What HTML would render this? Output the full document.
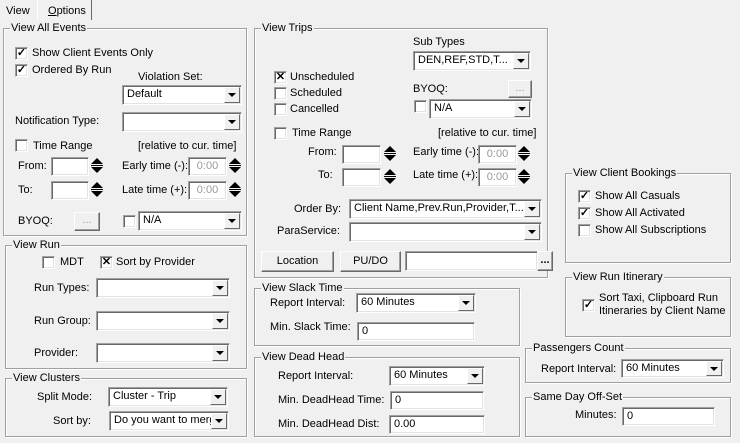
<!DOCTYPE html>
<html><head><meta charset="utf-8"><style>
*{box-sizing:border-box;margin:0;padding:0}
body{width:740px;height:443px;background:#f0f0f0;font:11px "Liberation Sans",Arial,sans-serif;color:#000;position:relative;overflow:hidden}
div,span{position:absolute}
.l{line-height:14px;white-space:nowrap}
.g{border:1px solid #a0a0a0;box-shadow:1px 1px 0 #fff,inset 1px 1px 0 #fff}
.gt{background:#f0f0f0;line-height:12px;padding:0 1px;top:-7px;left:6px;white-space:nowrap}
.f{background:#fff;border:1px solid;border-color:#a0a0a0 #fff #fff #a0a0a0;box-shadow:inset 1px 1px 0 #696969,inset -1px -1px 0 #e3e3e3;line-height:17px;padding-left:4px;white-space:nowrap;overflow:hidden}
.f.d{color:#9a9a9a;text-align:center;padding:0}
.dd{right:1px;top:1px;width:16px;height:calc(100% - 2px);background:#f0f0f0;border:1px solid;border-color:#fff #696969 #696969 #fff}
.dd:after{content:"";position:absolute;left:3px;top:50%;margin-top:-2px;border-left:4px solid transparent;border-right:4px solid transparent;border-top:4px solid #000}
.cb{width:13px;height:13px;background:#fff;border:1px solid;border-color:#a0a0a0 #fff #fff #a0a0a0;box-shadow:inset 1px 1px 0 #696969,inset -1px -1px 0 #e3e3e3}
.b{background:#f0f0f0;border:1px solid;border-color:#fff #696969 #696969 #fff;box-shadow:inset -1px -1px 0 #a0a0a0;text-align:center}
.sp{width:14px;height:18px}
.sp:before{content:"";position:absolute;left:1px;top:1px;border-left:6px solid transparent;border-right:6px solid transparent;border-bottom:6px solid #000}
.sp:after{content:"";position:absolute;left:1px;top:10px;border-left:6px solid transparent;border-right:6px solid transparent;border-top:6px solid #000}
.sp i{position:absolute;left:1px;top:8px;width:12px;height:1px;background:#000}
</style></head><body>

<!-- tabs -->
<span class="l" style="left:6px;top:4px">View</span>
<span class="l" style="left:48px;top:4px"><u>O</u>ptions</span>
<div style="left:91px;top:0;width:1px;height:20px;background:#696969"></div>
<div style="left:37px;top:0;width:1px;height:20px;background:#fff"></div>

<!-- View All Events -->
<div class="g" style="left:3px;top:28px;width:244px;height:208px"><span class="gt">View All Events</span></div>
<div class="cb" style="left:15px;top:47px"></div><span class="l" style="left:15px;top:46px;font-weight:bold;width:13px;text-align:center">✓</span>
<span class="l" style="left:32px;top:46px">Show Client Events Only</span>
<div class="cb" style="left:15px;top:64px"></div><span class="l" style="left:15px;top:63px;font-weight:bold;width:13px;text-align:center">✓</span>
<span class="l" style="left:32px;top:63px">Ordered By Run</span>
<span class="l" style="left:138px;top:70px">Violation Set:</span>
<div class="f" style="left:122px;top:85px;width:120px;height:20px">Default<div class="dd"></div></div>
<span class="l" style="left:15px;top:114px">Notification Type:</span>
<div class="f" style="left:122px;top:112px;width:120px;height:20px"><div class="dd"></div></div>
<div class="cb" style="left:15px;top:139px"></div>
<span class="l" style="left:33px;top:139px">Time Range</span>
<span class="l" style="left:138px;top:139px">[relative to cur. time]</span>
<span class="l" style="left:18px;top:159px">From:</span>
<div class="f" style="left:51px;top:157px;width:38px;height:19px"></div><div class="sp" style="left:90px;top:157px"><i></i></div>
<span class="l" style="left:122px;top:159px">Early time (-):</span>
<div class="f d" style="left:188px;top:157px;width:39px;height:19px">0:00</div><div class="sp" style="left:228px;top:157px"><i></i></div>
<span class="l" style="left:18px;top:183px">To:</span>
<div class="f" style="left:51px;top:181px;width:38px;height:19px"></div><div class="sp" style="left:90px;top:181px"><i></i></div>
<span class="l" style="left:122px;top:183px">Late time (+):</span>
<div class="f d" style="left:188px;top:181px;width:39px;height:19px">0:00</div><div class="sp" style="left:228px;top:181px"><i></i></div>
<span class="l" style="left:18px;top:214px">BYOQ:</span>
<div class="b" style="left:74px;top:212px;width:26px;height:19px;color:#a0a0a0;line-height:15px">...</div>
<div class="cb" style="left:123px;top:215px"></div>
<div class="f" style="left:138px;top:211px;width:104px;height:20px">N/A<div class="dd"></div></div>

<!-- View Run -->
<div class="g" style="left:5px;top:245px;width:242px;height:124px"><span class="gt">View Run</span></div>
<div class="cb" style="left:42px;top:256px"></div><span class="l" style="left:60px;top:255px">MDT</span>
<div class="cb" style="left:100px;top:256px"></div><span class="l" style="left:100px;top:255px;width:13px;text-align:center;font-weight:bold">✕</span>
<span class="l" style="left:116px;top:255px">Sort by Provider</span>
<span class="l" style="left:34px;top:281px">Run Types:</span>
<div class="f" style="left:96px;top:278px;width:134px;height:20px"><div class="dd"></div></div>
<span class="l" style="left:34px;top:314px">Run Group:</span>
<div class="f" style="left:96px;top:311px;width:134px;height:20px"><div class="dd"></div></div>
<span class="l" style="left:34px;top:346px">Provider:</span>
<div class="f" style="left:96px;top:343px;width:134px;height:20px"><div class="dd"></div></div>

<!-- View Clusters -->
<div class="g" style="left:5px;top:378px;width:242px;height:59px"><span class="gt">View Clusters</span></div>
<span class="l" style="left:37px;top:390px">Split Mode:</span>
<div class="f" style="left:108px;top:387px;width:120px;height:20px">Cluster - Trip<div class="dd"></div></div>
<span class="l" style="left:53px;top:414px">Sort by:</span>
<div class="f" style="left:109px;top:411px;width:120px;height:20px">Do you want to merg<div class="dd"></div></div>

<!-- View Trips -->
<div class="g" style="left:254px;top:28px;width:294px;height:250px"><span class="gt">View Trips</span></div>
<span class="l" style="left:413px;top:35px">Sub Types</span>
<div class="f" style="left:413px;top:51px;width:118px;height:20px">DEN,REF,STD,T...<div class="dd"></div></div>
<div class="cb" style="left:274px;top:71px"></div><span class="l" style="left:274px;top:70px;width:13px;text-align:center;font-weight:bold">✕</span>
<span class="l" style="left:290px;top:70px">Unscheduled</span>
<div class="cb" style="left:274px;top:87px"></div><span class="l" style="left:290px;top:86px">Scheduled</span>
<div class="cb" style="left:274px;top:103px"></div><span class="l" style="left:290px;top:102px">Cancelled</span>
<span class="l" style="left:413px;top:82px">BYOQ:</span>
<div class="b" style="left:508px;top:80px;width:24px;height:18px;color:#a0a0a0;line-height:14px">...</div>
<div class="cb" style="left:414px;top:100px"></div>
<div class="f" style="left:429px;top:99px;width:103px;height:20px">N/A<div class="dd"></div></div>
<div class="cb" style="left:274px;top:127px"></div>
<span class="l" style="left:292px;top:126px">Time Range</span>
<span class="l" style="left:438px;top:126px">[relative to cur. time]</span>
<span class="l" style="left:308px;top:145px">From:</span>
<div class="f" style="left:342px;top:145px;width:39px;height:19px"></div><div class="sp" style="left:383px;top:145px"><i></i></div>
<span class="l" style="left:413px;top:145px">Early time (-):</span>
<div class="f d" style="left:478px;top:145px;width:39px;height:19px">0:00</div><div class="sp" style="left:517px;top:145px"><i></i></div>
<span class="l" style="left:318px;top:168px">To:</span>
<div class="f" style="left:342px;top:168px;width:39px;height:19px"></div><div class="sp" style="left:383px;top:168px"><i></i></div>
<span class="l" style="left:413px;top:168px">Late time (+):</span>
<div class="f d" style="left:478px;top:168px;width:39px;height:19px">0:00</div><div class="sp" style="left:517px;top:168px"><i></i></div>
<span class="l" style="left:294px;top:202px">Order By:</span>
<div class="f" style="left:349px;top:199px;width:193px;height:20px">Client Name,Prev.Run,Provider,T...<div class="dd"></div></div>
<span class="l" style="left:277px;top:224px">ParaService:</span>
<div class="f" style="left:349px;top:222px;width:193px;height:20px"><div class="dd"></div></div>
<div class="b" style="left:261px;top:251px;width:73px;height:21px;line-height:18px">Location</div>
<div class="b" style="left:340px;top:251px;width:61px;height:21px;line-height:18px">PU/DO</div>
<div class="f" style="left:405px;top:251px;width:133px;height:20px"></div>
<div class="b" style="left:537px;top:251px;width:16px;height:20px;line-height:16px;font-weight:bold">...</div>

<!-- Slack -->
<div class="g" style="left:254px;top:288px;width:266px;height:58px"><span class="gt">View Slack Time</span></div>
<span class="l" style="left:270px;top:296px">Report Interval:</span>
<div class="f" style="left:356px;top:293px;width:120px;height:20px">60 Minutes<div class="dd"></div></div>
<span class="l" style="left:270px;top:320px">Min. Slack Time:</span>
<div class="f" style="left:357px;top:322px;width:118px;height:19px">0</div>

<!-- Dead Head -->
<div class="g" style="left:254px;top:357px;width:266px;height:80px"><span class="gt">View Dead Head</span></div>
<span class="l" style="left:278px;top:369px">Report Interval:</span>
<div class="f" style="left:389px;top:366px;width:96px;height:20px">60 Minutes<div class="dd"></div></div>
<span class="l" style="left:278px;top:393px">Min. DeadHead Time:</span>
<div class="f" style="left:390px;top:391px;width:94px;height:19px">0</div>
<span class="l" style="left:278px;top:417px">Min. DeadHead Dist:</span>
<div class="f" style="left:389px;top:415px;width:96px;height:19px">0.00</div>

<!-- Client Bookings -->
<div class="g" style="left:565px;top:173px;width:166px;height:90px"><span class="gt">View Client Bookings</span></div>
<div class="cb" style="left:578px;top:190px"></div><span class="l" style="left:578px;top:189px;width:13px;text-align:center;font-weight:bold">✓</span>
<span class="l" style="left:595px;top:189px">Show All Casuals</span>
<div class="cb" style="left:578px;top:207px"></div><span class="l" style="left:578px;top:206px;width:13px;text-align:center;font-weight:bold">✓</span>
<span class="l" style="left:595px;top:206px">Show All Activated</span>
<div class="cb" style="left:578px;top:224px"></div>
<span class="l" style="left:595px;top:223px">Show All Subscriptions</span>

<!-- Run Itinerary -->
<div class="g" style="left:565px;top:277px;width:166px;height:60px"><span class="gt">View Run Itinerary</span></div>
<div class="cb" style="left:582px;top:299px"></div><span class="l" style="left:582px;top:298px;width:13px;text-align:center;font-weight:bold">✓</span>
<span class="l" style="left:599px;top:292px;line-height:13px">Sort Taxi, Clipboard Run<br>Itineraries by Client Name</span>

<!-- Passengers -->
<div class="g" style="left:525px;top:348px;width:206px;height:35px"><span class="gt">Passengers Count</span></div>
<span class="l" style="left:541px;top:362px">Report Interval:</span>
<div class="f" style="left:621px;top:359px;width:103px;height:19px">60 Minutes<div class="dd"></div></div>

<!-- Same Day -->
<div class="g" style="left:525px;top:397px;width:206px;height:40px"><span class="gt">Same Day Off-Set</span></div>
<span class="l" style="left:575px;top:408px">Minutes:</span>
<div class="f" style="left:622px;top:407px;width:93px;height:19px">0</div>
</body></html>
